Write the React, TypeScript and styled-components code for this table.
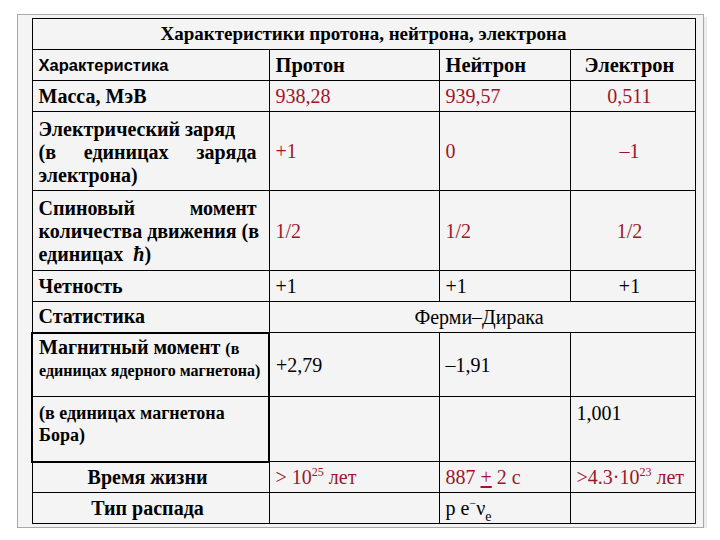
import styled, { createGlobalStyle } from "styled-components";

const GlobalStyle = createGlobalStyle`
  body {
    margin: 0;
    background: #ffffff;
    font-family: "Liberation Serif", "Times New Roman", serif;
  }
`;

const Frame = styled.div`
  margin: 14px 0 0 17px;
  padding: 3px 9px 3px 13px;
  width: 663px;
  background: #f4f4f4;
  border: 1px solid #a8a8a8;
  box-shadow: 3px 3px 0 #ececec;
`;

const Table = styled.table`
  border-collapse: collapse;
  table-layout: fixed;
  width: 663px;
  font-family: "Liberation Serif", "Times New Roman", serif;
  color: #000;
`;

const Row = styled.tr<{ $h: number }>`
  height: ${(p) => p.$h}px;
`;

const Cell = styled.td<{ $align?: string; $valign?: string; $thick?: string; $pt?: number }>`
  border: 1px solid #000;
  padding: ${(p) => p.$pt || 0}px 12px 0 6px;
  font-family: "Liberation Serif", "Times New Roman", serif;
  text-align: ${(p) => p.$align || "left"};
  vertical-align: ${(p) => p.$valign || "middle"};
  ${(p) => p.$thick && `border-${p.$thick}: 2px solid #000;`}
`;

const MagCell = styled(Cell)`
  border-left: 2px solid #000;
  border-right: 2px solid #000;
`;

const TitleCell = styled.th`
  border: 1px solid #000;
  font-family: "Liberation Serif", "Times New Roman", serif;
  font-weight: bold;
  font-size: 19px;
  text-align: center;
  padding: 0;
`;

const HeadSans = styled.span`
  font-family: "Liberation Sans", Arial, sans-serif;
  font-weight: bold;
  font-size: 16.5px;
`;

const HeadSerif = styled.span`
  font-family: "Liberation Serif", "Times New Roman", serif;
  font-weight: bold;
  font-size: 20.5px;
`;

const Label = styled.div<{ $size?: number; $lh?: number }>`
  font-family: "Liberation Serif", "Times New Roman", serif;
  font-weight: bold;
  font-size: ${(p) => p.$size || 20}px;
  line-height: ${(p) => p.$lh || 23}px;
  white-space: nowrap;
`;

const Line = styled.div<{ $justify?: boolean }>`
  white-space: ${(p) => (p.$justify ? "normal" : "nowrap")};
  text-align: ${(p) => (p.$justify ? "justify" : "left")};
  text-align-last: ${(p) => (p.$justify ? "justify" : "auto")};
`;

const Small = styled.span`
  font-size: 16px;
`;

const Value = styled.span<{ $red?: boolean }>`
  font-family: "Liberation Serif", "Times New Roman", serif;
  font-size: 20px;
  line-height: 22px;
  white-space: nowrap;
  color: ${(p) => (p.$red ? "#a0142a" : "#000")};
`;

const Sup = styled.sup`
  font-size: 12px;
  vertical-align: 8px;
  line-height: 0;
`;

const Sub = styled.sub`
  font-size: 14px;
  vertical-align: -6px;
  line-height: 0;
`;

const Plus = styled.span`
  text-decoration: underline;
  text-decoration-thickness: 2px;
  text-underline-offset: 2px;
`;

export default function App() {
  return (
    <>
      <GlobalStyle />
      <Frame>
        <Table>
          <colgroup>
            <col style={{ width: 237 }} />
            <col style={{ width: 170 }} />
            <col style={{ width: 131 }} />
            <col style={{ width: 125 }} />
          </colgroup>
          <tbody>
            <Row $h={31}>
              <TitleCell colSpan={4}>Характеристики протона, нейтрона, электрона</TitleCell>
            </Row>
            <Row $h={31}>
              <Cell><HeadSans>Характеристика</HeadSans></Cell>
              <Cell><HeadSerif>Протон</HeadSerif></Cell>
              <Cell><HeadSerif>Нейтрон</HeadSerif></Cell>
              <Cell $align="center"><HeadSerif>Электрон</HeadSerif></Cell>
            </Row>
            <Row $h={31}>
              <Cell><Label>Масса, МэВ</Label></Cell>
              <Cell><Value $red>938,28</Value></Cell>
              <Cell><Value $red>939,57</Value></Cell>
              <Cell $align="center"><Value $red>0,511</Value></Cell>
            </Row>
            <Row $h={79}>
              <Cell $pt={2}>
                <Label>
                  <Line>Электрический заряд</Line>
                  <Line $justify>(в единицах заряда</Line>
                  <Line>электрона)</Line>
                </Label>
              </Cell>
              <Cell><Value $red>+1</Value></Cell>
              <Cell><Value $red>0</Value></Cell>
              <Cell $align="center"><Value $red>–1</Value></Cell>
            </Row>
            <Row $h={80}>
              <Cell $pt={2}>
                <Label>
                  <Line $justify>Спиновый момент</Line>
                  <Line>количества движения (в</Line>
                  <Line>единицах&nbsp; <i>ħ</i>)</Line>
                </Label>
              </Cell>
              <Cell><Value $red>1/2</Value></Cell>
              <Cell><Value $red>1/2</Value></Cell>
              <Cell $align="center"><Value $red>1/2</Value></Cell>
            </Row>
            <Row $h={31}>
              <Cell><Label>Четность</Label></Cell>
              <Cell><Value>+1</Value></Cell>
              <Cell><Value>+1</Value></Cell>
              <Cell $align="center"><Value>+1</Value></Cell>
            </Row>
            <Row $h={31}>
              <Cell><Label>Статистика</Label></Cell>
              <Cell colSpan={3} $align="center"><Value>Ферми–Дирака</Value></Cell>
            </Row>
            <Row $h={64}>
              <MagCell $valign="top" $thick="top" $pt={3}>
                <Label $lh={20}>
                  <Line>Магнитный момент <Small>(в</Small></Line>
                  <Line><Small>единицах ядерного магнетона)</Small></Line>
                </Label>
              </MagCell>
              <Cell><Value>+2,79</Value></Cell>
              <Cell><Value>–1,91</Value></Cell>
              <Cell />
            </Row>
            <Row $h={65}>
              <MagCell $valign="top" $thick="bottom" $pt={5}>
                <Label $size={18} $lh={22}>
                  <Line>(в единицах магнетона</Line>
                  <Line>Бора)</Line>
                </Label>
              </MagCell>
              <Cell />
              <Cell />
              <Cell $valign="top" $pt={5}><Value>1,001</Value></Cell>
            </Row>
            <Row $h={31}>
              <Cell $align="center"><Label>Время жизни</Label></Cell>
              <Cell><Value $red>&gt; 10<Sup>25</Sup> лет</Value></Cell>
              <Cell><Value $red>887 <Plus>+</Plus> 2 с</Value></Cell>
              <Cell style={{ paddingLeft: 6, paddingRight: 0 }}>
                <Value $red>&gt;4.3·10<Sup>23</Sup> лет</Value>
              </Cell>
            </Row>
            <Row $h={31}>
              <Cell $align="center"><Label>Тип распада</Label></Cell>
              <Cell />
              <Cell><Value>p e<Sup>−</Sup>ν<Sub>e</Sub></Value></Cell>
              <Cell />
            </Row>
          </tbody>
        </Table>
      </Frame>
    </>
  );
}
